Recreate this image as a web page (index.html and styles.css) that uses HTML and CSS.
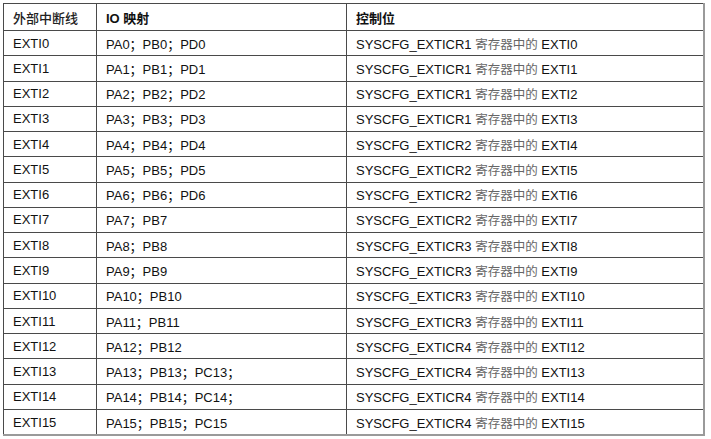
FILE: index.html
```html
<!DOCTYPE html>
<html>
<head>
<meta charset="utf-8">
<link rel="stylesheet" href="styles.css">
</head>
<body>
<table class="exti">
<colgroup><col class="c1"><col class="c2"><col class="c3"></colgroup>
<thead>
<tr><th class="h-zh">外部中断线</th><th>IO 映射</th><th>控制位</th></tr>
</thead>
<tbody>
<tr><td>EXTI0</td><td>PA0；PB0；PD0</td><td>SYSCFG_EXTICR1 <span class="zh">寄存器中的</span> EXTI0</td></tr>
<tr><td>EXTI1</td><td>PA1；PB1；PD1</td><td>SYSCFG_EXTICR1 <span class="zh">寄存器中的</span> EXTI1</td></tr>
<tr><td>EXTI2</td><td>PA2；PB2；PD2</td><td>SYSCFG_EXTICR1 <span class="zh">寄存器中的</span> EXTI2</td></tr>
<tr><td>EXTI3</td><td>PA3；PB3；PD3</td><td>SYSCFG_EXTICR1 <span class="zh">寄存器中的</span> EXTI3</td></tr>
<tr><td>EXTI4</td><td>PA4；PB4；PD4</td><td>SYSCFG_EXTICR2 <span class="zh">寄存器中的</span> EXTI4</td></tr>
<tr><td>EXTI5</td><td>PA5；PB5；PD5</td><td>SYSCFG_EXTICR2 <span class="zh">寄存器中的</span> EXTI5</td></tr>
<tr><td>EXTI6</td><td>PA6；PB6；PD6</td><td>SYSCFG_EXTICR2 <span class="zh">寄存器中的</span> EXTI6</td></tr>
<tr><td>EXTI7</td><td>PA7；PB7</td><td>SYSCFG_EXTICR2 <span class="zh">寄存器中的</span> EXTI7</td></tr>
<tr><td>EXTI8</td><td>PA8；PB8</td><td>SYSCFG_EXTICR3 <span class="zh">寄存器中的</span> EXTI8</td></tr>
<tr><td>EXTI9</td><td>PA9；PB9</td><td>SYSCFG_EXTICR3 <span class="zh">寄存器中的</span> EXTI9</td></tr>
<tr><td>EXTI10</td><td>PA10；PB10</td><td>SYSCFG_EXTICR3 <span class="zh">寄存器中的</span> EXTI10</td></tr>
<tr><td>EXTI11</td><td>PA11；PB11</td><td>SYSCFG_EXTICR3 <span class="zh">寄存器中的</span> EXTI11</td></tr>
<tr><td>EXTI12</td><td>PA12；PB12</td><td>SYSCFG_EXTICR4 <span class="zh">寄存器中的</span> EXTI12</td></tr>
<tr><td>EXTI13</td><td>PA13；PB13；PC13；</td><td>SYSCFG_EXTICR4 <span class="zh">寄存器中的</span> EXTI13</td></tr>
<tr><td>EXTI14</td><td>PA14；PB14；PC14；</td><td>SYSCFG_EXTICR4 <span class="zh">寄存器中的</span> EXTI14</td></tr>
<tr><td>EXTI15</td><td>PA15；PB15；PC15</td><td>SYSCFG_EXTICR4 <span class="zh">寄存器中的</span> EXTI15</td></tr>
</tbody>
</table>
</body>
</html>
```

FILE: styles.css
```css
html, body {
  margin: 0;
  padding: 0;
  background: #ffffff;
}
body {
  padding: 3px 0 0 3px;
  font-family: "Liberation Sans", Arial, "Noto Sans CJK SC", sans-serif;
  font-size: 13px;
  color: #111;
}
.exti {
  border-collapse: collapse;
  table-layout: fixed;
  width: 700px;
  border-right: 2px solid #9a9a9a;
  border-bottom: 2px solid #9a9a9a;
}
.c1 { width: 93px; }
.c2 { width: 250px; }
.c3 { width: 357px; }
.exti th,
.exti td {
  border: 1px solid #4a4a4a;
  padding: 0 0 0 9px;
  text-align: left;
  white-space: nowrap;
  vertical-align: middle;
}
.exti th {
  height: 26px;
  font-weight: bold;
}
.exti th.h-zh {
  font-weight: 500;
  color: #222;
}
.exti td {
  height: 24.27px;
}
.exti tr td:last-child,
.exti tr th:last-child {
  border-right: 2px solid #9a9a9a;
}
.exti tbody tr:last-child td {
  border-bottom: 2px solid #9a9a9a;
}
.zh {
  color: #666;
  font-size: 12.5px;
}
```
